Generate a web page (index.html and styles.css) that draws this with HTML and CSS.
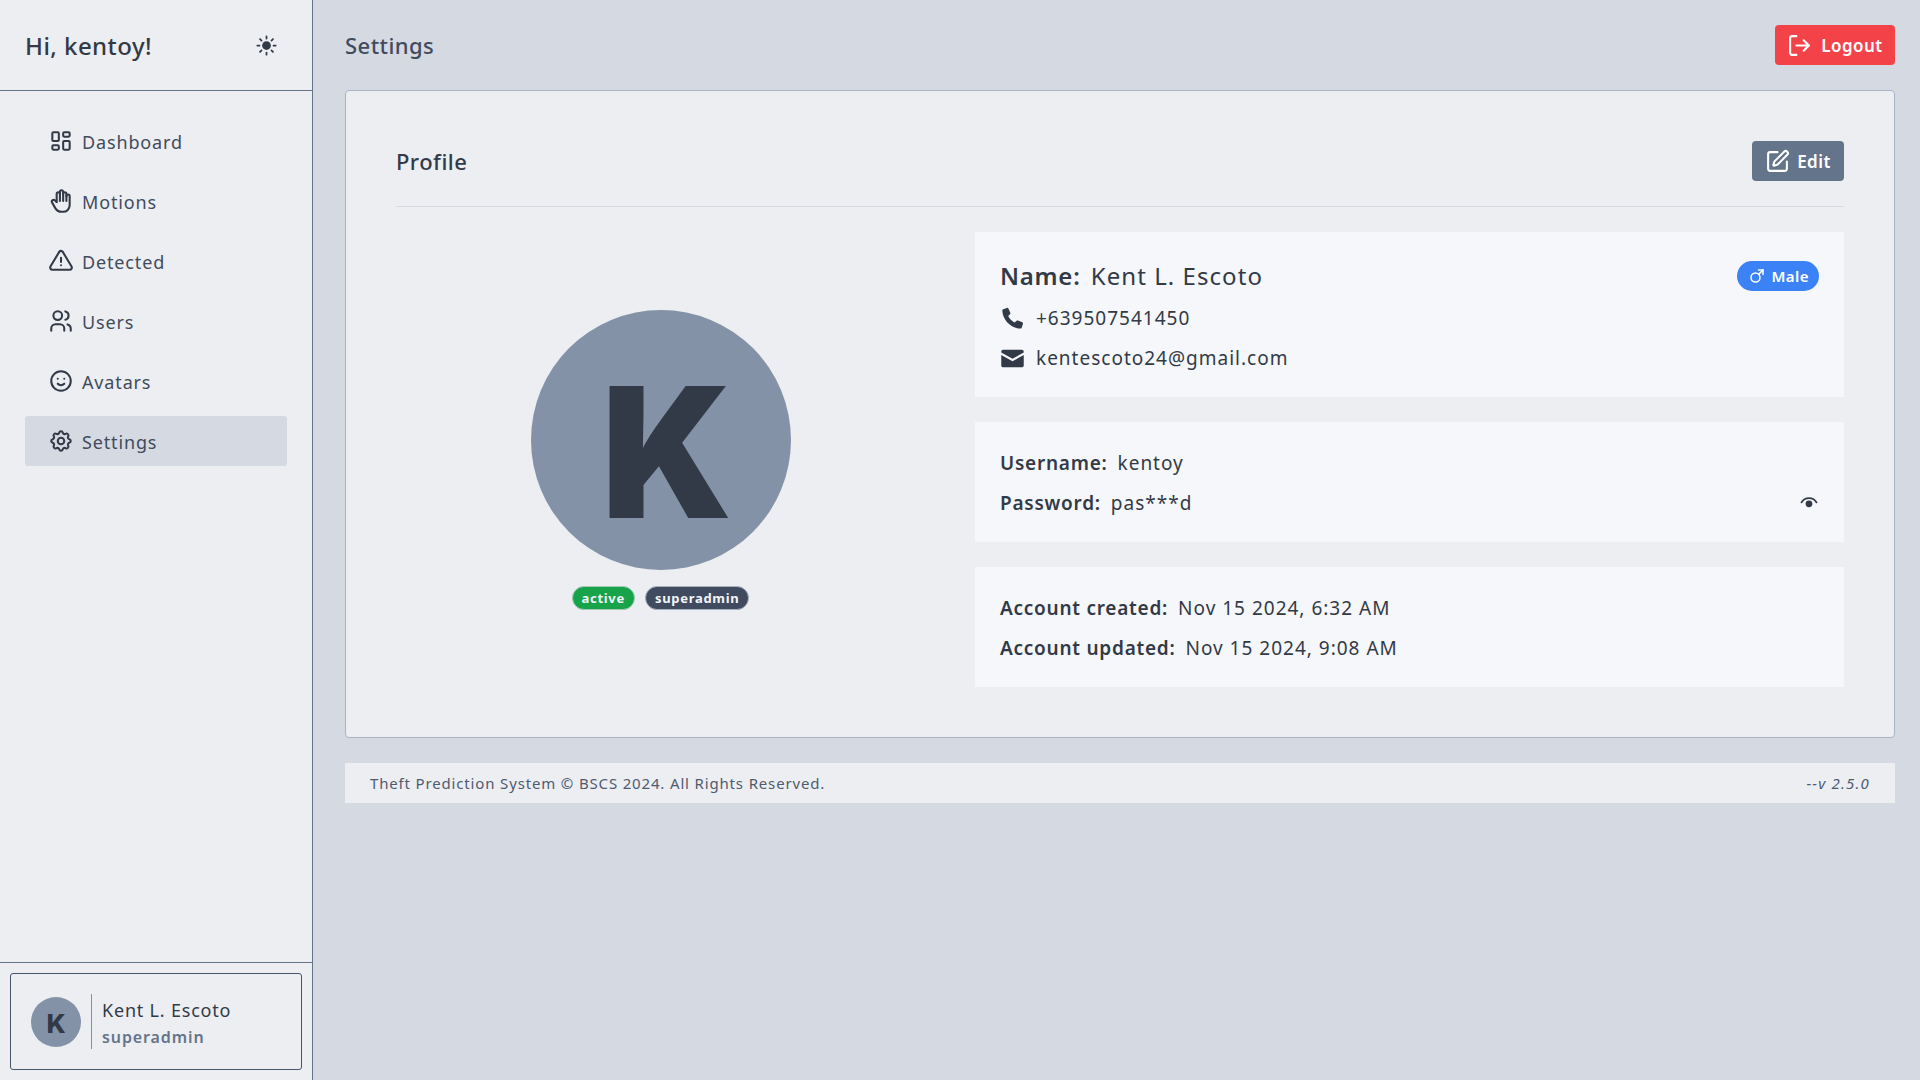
FILE: index.html
```html
<!DOCTYPE html>
<html lang="en">
<head>
    <meta charset="UTF-8">
    <meta name="viewport" content="width=device-width, initial-scale=1.0">
    <title>Settings</title>
    <link rel="stylesheet" href="styles.css">
</head>
<body>
    <div class="app">
        <aside class="sidebar">
            <div class="sidebarTop">
                <h1 class="greeting">Hi, kentoy!</h1>
                <svg class="sunIcon" viewBox="0 0 24 24" fill="none" stroke="currentColor" stroke-width="2" stroke-linecap="round">
                    <circle cx="12" cy="12" r="5" fill="currentColor" stroke="none"/>
                    <path d="M12 1.5v2.5M12 20v2.5M1.5 12h2.5M20 12h2.5M4.6 4.6l1.7 1.7M17.7 17.7l1.7 1.7M4.6 19.4l1.7-1.7M17.7 6.3l1.7-1.7"/>
                </svg>
            </div>
            <nav class="nav">
                <a class="navItem">
                    <svg class="navIcon" viewBox="0 0 24 24"><path d="M5 4h4a1 1 0 0 1 1 1v6a1 1 0 0 1 -1 1h-4a1 1 0 0 1 -1 -1v-6a1 1 0 0 1 1 -1"/><path d="M5 16h4a1 1 0 0 1 1 1v2a1 1 0 0 1 -1 1h-4a1 1 0 0 1 -1 -1v-2a1 1 0 0 1 1 -1"/><path d="M15 12h4a1 1 0 0 1 1 1v6a1 1 0 0 1 -1 1h-4a1 1 0 0 1 -1 -1v-6a1 1 0 0 1 1 -1"/><path d="M15 4h4a1 1 0 0 1 1 1v2a1 1 0 0 1 -1 1h-4a1 1 0 0 1 -1 -1v-2a1 1 0 0 1 1 -1"/></svg>
                    Dashboard
                </a>
                <a class="navItem">
                    <svg class="navIcon" viewBox="0 0 24 24"><path d="M8 13v-7.5a1.5 1.5 0 0 1 3 0v6.5"/><path d="M11 5.5v-2a1.5 1.5 0 1 1 3 0v8.5"/><path d="M14 5.5a1.5 1.5 0 0 1 3 0v6.5"/><path d="M17 7.5a1.5 1.5 0 0 1 3 0v8.5a6 6 0 0 1 -6 6h-2h.208a6 6 0 0 1 -5.012 -2.7a69.74 69.74 0 0 1 -.196 -.3c-.312 -.479 -1.407 -2.388 -3.286 -5.728a1.5 1.5 0 0 1 .536 -2.022a1.867 1.867 0 0 1 2.28 .28l1.47 1.47"/></svg>
                    Motions
                </a>
                <a class="navItem">
                    <svg class="navIcon" viewBox="0 0 24 24"><path d="M12 9v4"/><path d="M10.363 3.591l-8.106 13.534a1.914 1.914 0 0 0 1.636 2.871h16.214a1.914 1.914 0 0 0 1.636 -2.87l-8.106 -13.536a1.914 1.914 0 0 0 -3.274 0z"/><path d="M12 16h.01"/></svg>
                    Detected
                </a>
                <a class="navItem">
                    <svg class="navIcon" viewBox="0 0 24 24"><circle cx="9" cy="7" r="4"/><path d="M3 21v-2a4 4 0 0 1 4 -4h4a4 4 0 0 1 4 4v2"/><path d="M16 3.13a4 4 0 0 1 0 7.75"/><path d="M21 21v-2a4 4 0 0 0 -3 -3.85"/></svg>
                    Users
                </a>
                <a class="navItem">
                    <svg class="navIcon" viewBox="0 0 24 24"><circle cx="12" cy="12" r="9"/><path d="M9 10h.01"/><path d="M15 10h.01"/><path d="M9 14.5a4 4 0 0 0 6 0"/></svg>
                    Avatars
                </a>
                <a class="navItem navItemActive">
                    <svg class="navIcon" viewBox="0 0 24 24"><path d="M10.325 4.317c.426 -1.756 2.924 -1.756 3.35 0a1.724 1.724 0 0 0 2.573 1.066c1.543 -.94 3.31 .826 2.37 2.37a1.724 1.724 0 0 0 1.065 2.572c1.756 .426 1.756 2.924 0 3.35a1.724 1.724 0 0 0 -1.066 2.573c.94 1.543 -.826 3.31 -2.37 2.37a1.724 1.724 0 0 0 -2.572 1.065c-.426 1.756 -2.924 1.756 -3.35 0a1.724 1.724 0 0 0 -2.573 -1.066c-1.543 .94 -3.31 -.826 -2.37 -2.37a1.724 1.724 0 0 0 -1.065 -2.572c-1.756 -.426 -1.756 -2.924 0 -3.35a1.724 1.724 0 0 0 1.066 -2.573c-.94 -1.543 .826 -3.31 2.37 -2.37c1 .608 2.296 .07 2.572 -1.065z"/><circle cx="12" cy="12" r="3"/></svg>
                    Settings
                </a>
            </nav>
            <div class="sidebarBottom">
                <div class="userCard">
                    <div class="miniAvatar">K</div>
                    <div class="userText">
                        <p class="userName">Kent L. Escoto</p>
                        <p class="userRole">superadmin</p>
                    </div>
                </div>
            </div>
        </aside>
        <div class="content">
            <header class="topBar">
                <h2 class="pageTitle">Settings</h2>
                <button class="logoutBtn">
                    <svg class="btnIcon" viewBox="0 0 24 24"><path d="M9 21H5a2 2 0 0 1-2-2V5a2 2 0 0 1 2-2h4"/><path d="M16 17l5-5-5-5"/><path d="M21 12H9"/></svg>
                    Logout
                </button>
            </header>
            <main class="profileCard">
                <div class="profileHead">
                    <h3 class="profileTitle">Profile</h3>
                    <button class="editBtn">
                        <svg class="btnIcon" viewBox="0 0 24 24"><path d="M12 3H5a2 2 0 0 0-2 2v14a2 2 0 0 0 2 2h14a2 2 0 0 0 2-2v-7"/><path d="M18.375 2.625a1 1 0 0 1 3 3l-9.013 9.014a2 2 0 0 1-.853.505l-2.873.84a.5.5 0 0 1-.62-.62l.84-2.873a2 2 0 0 1 .506-.852z"/></svg>
                        Edit
                    </button>
                </div>
                <div class="profileBody">
                    <div class="avatarCol">
                        <div class="bigAvatar"><span class="bigLetter">K</span></div>
                        <div class="badges">
                            <span class="badge badgeActive">active</span>
                            <span class="badge badgeRole">superadmin</span>
                        </div>
                    </div>
                    <div class="infoCol">
                        <section class="panel">
                            <div class="nameRow">
                                <p class="nameLine"><b>Name:</b> Kent L. Escoto</p>
                                <span class="genderPill">
                                    <svg class="genderIcon" viewBox="0 0 24 24"><circle cx="10" cy="14" r="6"/><path d="M20 4l-5.8 5.8"/><path d="M20 4h-6"/><path d="M20 4v6"/></svg>
                                    Male
                                </span>
                            </div>
                            <p class="infoLine">
                                <svg class="infoIcon" viewBox="0 0 24 24"><path d="M6.6 1.8c.6-.2 1.2 0 1.5.6l1.8 4c.2.5.1 1-.3 1.4L7.9 9.5c1.2 2.6 3.4 4.9 6.2 6.4l1.8-1.7c.4-.4.9-.5 1.4-.3l4.1 1.8c.6.3.8.9.6 1.5l-1.2 3.6c-.2.6-.7.9-1.3.9C10.400 21.500 2.500 13.500 2.200 4.400c0-.6.3-1.100.9-1.300z"/></svg>
                                +639507541450
                            </p>
                            <p class="infoLine">
                                <svg class="infoIcon" viewBox="0 0 24 24"><path d="M3 3.500h18c1 0 1.800.8 1.800 1.800v.9L12 12.200 1.200 6.200v-.9c0-1 .8-1.800 1.800-1.800z"/><path d="M1.200 8.600V18.700c0 1 .8 1.800 1.800 1.800h18c1 0 1.800-.8 1.800-1.800V8.600L12 14.600z"/></svg>
                                kentescoto24@gmail.com
                            </p>
                        </section>
                        <section class="panel">
                            <p class="infoLine"><b>Username:</b> kentoy</p>
                            <div class="passwordRow">
                                <p class="infoLine"><b>Password:</b> pas***d</p>
                                <svg class="eyeIcon" viewBox="0 0 24 24"><circle cx="12" cy="13" r="4.500" fill="currentColor"/><path d="M1.500 12C4 7.500 8 5.500 12 5.500S20 7.500 22.500 12" fill="none" stroke="currentColor" stroke-width="2.200"/></svg>
                            </div>
                        </section>
                        <section class="panel">
                            <p class="infoLine"><b>Account created:</b> Nov 15 2024, 6:32 AM</p>
                            <p class="infoLine"><b>Account updated:</b> Nov 15 2024, 9:08 AM</p>
                        </section>
                    </div>
                </div>
            </main>
            <footer class="footer">
                <span>Theft Prediction System © BSCS 2024. All Rights Reserved.</span>
                <span class="version">--v 2.5.0</span>
            </footer>
        </div>
    </div>
</body>
</html>
```

FILE: styles.css
```css
* {
    box-sizing: border-box;
}

body {
    margin: 0;
    background-color: #d4d9e2;
    color: #333a47;
    font-family: "Noto Sans", "Open Sans", sans-serif;
    letter-spacing: 0.45px;
}

p, h1, h2, h3 {
    margin: 0;
    font-weight: 400;
}

.app {
    display: flex;
    height: 1080px;
    overflow: hidden;
}

/* sidebar */
.sidebar {
    display: flex;
    flex-direction: column;
    width: 313px;
    background-color: #eceef2;
    border-right: 1px solid #64748b;
}

.sidebarTop {
    display: flex;
    justify-content: space-between;
    align-items: center;
    height: 91px;
    padding: 1px 35px 0 25px;
    border-bottom: 1px solid #64748b;
}

.greeting {
    font-size: 24px;
    font-weight: 500;
}

.sunIcon {
    width: 21px;
    height: 21px;
    margin-bottom: 1px;
}

.nav {
    display: flex;
    flex-direction: column;
    flex: 1;
    gap: 10px;
    padding: 25px 25px 0;
}

.navItem {
    display: flex;
    align-items: center;
    gap: 8px;
    height: 50px;
    padding: 1px 0 0 23px;
    border-radius: 3px;
    font-size: 18px;
    letter-spacing: 0.85px;
    color: #414b5c;
}

.navItemActive {
    background-color: #d4d9e2;
}

.navIcon {
    flex: none;
    width: 26px;
    height: 26px;
    margin-top: -1px;
    fill: none;
    stroke: #333a47;
    stroke-width: 1.9;
    stroke-linecap: round;
    stroke-linejoin: round;
}

.sidebarBottom {
    padding: 10px 10px 10px;
    border-top: 1px solid #64748b;
}

.userCard {
    display: flex;
    align-items: center;
    height: 97px;
    padding-left: 20px;
    border: 1px solid #475569;
    border-radius: 3px;
}

.miniAvatar {
    display: flex;
    align-items: center;
    justify-content: center;
    width: 50px;
    height: 50px;
    padding-top: 3px;
    border-radius: 50%;
    background-color: #8492a8;
    font-family: "Inter", sans-serif;
    font-weight: 800;
    font-size: 26px;
    letter-spacing: 0;
}

.userText {
    margin-left: 10px;
    padding: 3px 0 0 10px;
    border-left: 1px solid #8492a8;
    height: 55px;
}

.userName {
    font-size: 18px;
    line-height: 27px;
    letter-spacing: 0.8px;
    color: #333a47;
}

.userRole {
    font-size: 16px;
    font-weight: 600;
    line-height: 27px;
    letter-spacing: 0.9px;
    color: #64748b;
}

/* main column */
.content {
    flex: 1;
    padding: 0 25px 0 32px;
}

.topBar {
    display: flex;
    justify-content: space-between;
    align-items: center;
    height: 90px;
}

.pageTitle {
    font-size: 22px;
    font-weight: 500;
    color: #414b5c;
}

.logoutBtn, .editBtn {
    display: flex;
    align-items: center;
    justify-content: center;
    height: 40px;
    padding: 1px 0 0;
    border: 0;
    border-radius: 4px;
    color: #ffffff;
    font-family: inherit;
    font-size: 17px;
    font-weight: 600;
    letter-spacing: 0.45px;
}

.logoutBtn {
    width: 120px;
    gap: 9px;
    background-color: #f34348;
}

.editBtn {
    width: 92px;
    gap: 7px;
    background-color: #64748b;
}

.btnIcon {
    flex: none;
    width: 25px;
    height: 25px;
    margin-top: -1px;
    fill: none;
    stroke: #ffffff;
    stroke-width: 2;
    stroke-linecap: round;
    stroke-linejoin: round;
}

.profileCard {
    height: 648px;
    padding: 50px 50px 0;
    background-color: #eceef2;
    border: 1px solid #a9b4c6;
    border-radius: 4px;
}

.profileHead {
    display: flex;
    justify-content: space-between;
    align-items: center;
    height: 66px;
    padding-bottom: 25px;
    border-bottom: 1px solid #d4d9e2;
}

.profileTitle {
    font-size: 22px;
    font-weight: 500;
}

.profileBody {
    display: grid;
    grid-template-columns: 1fr 869px;
    gap: 50px;
    padding-top: 25px;
}

.avatarCol {
    display: flex;
    flex-direction: column;
    align-items: center;
    justify-content: center;
    padding-top: 1px;
}

.bigAvatar {
    display: flex;
    align-items: center;
    justify-content: center;
    width: 260px;
    height: 260px;
    padding: 24px 0 0 13px;
    border-radius: 50%;
    background-color: #8492a8;
    font-family: "Inter", sans-serif;
    font-weight: 900;
    font-size: 181px;
    line-height: 1;
    letter-spacing: 0;
}

.bigLetter {
    transform: scaleX(0.95);
}

.badges {
    display: flex;
    gap: 10px;
    margin-top: 16px;
}

.badge {
    height: 24px;
    padding: 0 9px;
    border-radius: 12px;
    font-size: 13px;
    font-weight: 700;
    line-height: 22px;
    letter-spacing: 0.7px;
    color: #f1f5f9;
}

.badgeActive {
    background-color: #16a34a;
    border: 1px solid #a2c9b5;
}

.badgeRole {
    background-color: #414b5f;
    border: 1px solid #a9b1bf;
}

.infoCol {
    display: flex;
    flex-direction: column;
    gap: 25px;
}

.panel {
    display: flex;
    flex-direction: column;
    gap: 10px;
    padding: 26px 25px 24px;
    background-color: #f5f7fa;
}

.nameRow, .passwordRow {
    display: flex;
    justify-content: space-between;
    align-items: center;
}

.nameLine {
    font-size: 24px;
    line-height: 35px;
    letter-spacing: 1.05px;
}

.nameLine b, .infoLine b {
    font-weight: 600;
    letter-spacing: 0.75px;
    margin-right: 3px;
}

.infoLine {
    display: flex;
    align-items: center;
    gap: 7px;
    font-size: 19px;
    line-height: 30px;
    letter-spacing: 1px;
}

.infoIcon {
    flex: none;
    width: 25px;
    height: 25px;
    margin-right: 4px;
    fill: #333a47;
}

.genderPill {
    display: flex;
    align-items: center;
    gap: 5px;
    height: 30px;
    padding: 0 10px 0 11px;
    border-radius: 15px;
    background-color: #3b82f6;
    color: #ffffff;
    font-size: 15px;
    font-weight: 600;
}

.genderIcon {
    width: 18px;
    height: 18px;
    fill: none;
    stroke: #ffffff;
    stroke-width: 2;
    stroke-linecap: round;
    stroke-linejoin: round;
}

.eyeIcon {
    width: 18px;
    height: 18px;
    margin-right: 1px;
    color: #333a47;
}

.footer {
    display: flex;
    justify-content: space-between;
    align-items: center;
    height: 40px;
    margin-top: 25px;
    padding: 0 25px;
    background-color: #eceef2;
    font-size: 15px;
    letter-spacing: 0.84px;
    color: #4f5b70;
}

.version {
    font-style: italic;
    letter-spacing: 1.2px;
}
```
